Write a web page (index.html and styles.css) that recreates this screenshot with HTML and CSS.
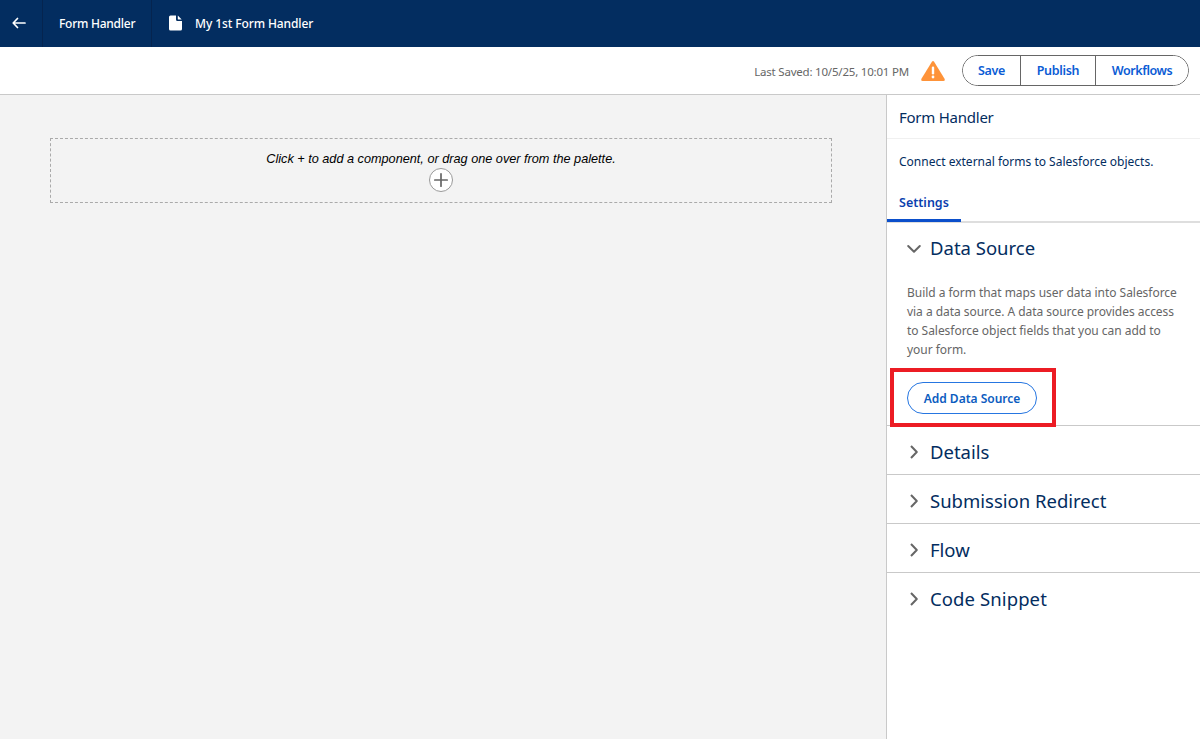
FILE: index.html
```html
<!DOCTYPE html>
<html lang="en">
  <head>
    <meta charset="utf-8">
    <title>My 1st Form Handler</title>
    <link rel="stylesheet" href="styles.css">
  </head>
  <body>
    <header class="navbar">
      <a class="nav-back" href="#" aria-label="Back">
        <svg width="14" height="12" viewBox="0 0 14 12"><path d="M13 6H1.5M5.500 1.500L1.200 6L5.500 10.500" fill="none" stroke="#fff" stroke-width="1.7" stroke-linecap="round" stroke-linejoin="round"/></svg>
      </a>
      <div class="nav-item">Form Handler</div>
      <div class="nav-page">
        <svg width="13" height="16" viewBox="0 0 13 16"><path d="M1.500 0.500H7V4.500Q7 6 8.500 6H13V14Q13 15.500 11.500 15.500H1.500Q0 15.500 0 14V2Q0 0.500 1.500 0.500Z" fill="#fff"/><path d="M8.800 0.600L12.700 4.500H9.300Q8.800 4.500 8.800 4Z" fill="#fff"/></svg>
        <span>My 1st Form Handler</span>
      </div>
    </header>

    <div class="toolbar">
      <span class="saved">Last Saved: 10/5/25, 10:01 PM</span>
      <svg class="warning" width="24" height="20" viewBox="0 0 24 20"><path d="M10.900 0.700Q12 -0.700 13.100 0.700L23.700 18Q24.400 20 22.500 20H1.500Q-0.400 20 0.300 18Z" fill="#fe9339"/><path d="M12 6.800V12.300" stroke="#fff" stroke-width="2.400" stroke-linecap="round"/><circle cx="12" cy="16" r="1.400" fill="#fff"/></svg>
      <div class="button-group">
        <button class="save">Save</button>
        <button class="publish">Publish</button>
        <button class="workflows">Workflows</button>
      </div>
    </div>

    <div class="builder">
      <main class="canvas">
        <div class="dropzone">
          <p>Click + to add a component, or drag one over from the palette.</p>
          <button class="add-component" aria-label="Add component">
            <svg width="14" height="14" viewBox="0 0 14 14"><path d="M7 0.800V13.200M0.800 7H13.200" stroke="#666" stroke-width="1.700" stroke-linecap="round"/></svg>
          </button>
        </div>
      </main>

      <aside class="panel">
        <h1>Form Handler</h1>
        <p class="panel-intro">Connect external forms to Salesforce objects.</p>
        <nav class="tabs"><a class="tab" href="#">Settings</a></nav>

        <section class="section open">
          <h2>
            <svg width="14" height="14" viewBox="0 0 14 14"><path d="M1.200 5L7 10.700L12.800 5" fill="none" stroke="#666" stroke-width="2" stroke-linecap="round" stroke-linejoin="round"/></svg>
            <span>Data Source</span>
          </h2>
          <p class="section-text">Build a form that maps user data into Salesforce<br>via a data source. A data source provides access<br>to Salesforce object fields that you can add to<br>your form.</p>
          <div class="highlight">
            <button class="add-source">Add Data Source</button>
          </div>
        </section>
        <section class="section">
          <h2>
            <svg width="14" height="14" viewBox="0 0 14 14"><path d="M4 2L9.800 8L4 14" fill="none" stroke="#666" stroke-width="2" stroke-linejoin="round"/></svg>
            <span>Details</span>
          </h2>
        </section>
        <section class="section">
          <h2>
            <svg width="14" height="14" viewBox="0 0 14 14"><path d="M4 2L9.800 8L4 14" fill="none" stroke="#666" stroke-width="2" stroke-linejoin="round"/></svg>
            <span>Submission Redirect</span>
          </h2>
        </section>
        <section class="section">
          <h2>
            <svg width="14" height="14" viewBox="0 0 14 14"><path d="M4 2L9.800 8L4 14" fill="none" stroke="#666" stroke-width="2" stroke-linejoin="round"/></svg>
            <span>Flow</span>
          </h2>
        </section>
        <section class="section">
          <h2>
            <svg width="14" height="14" viewBox="0 0 14 14"><path d="M4 2L9.800 8L4 14" fill="none" stroke="#666" stroke-width="2" stroke-linejoin="round"/></svg>
            <span class="snippet">Code Snippet</span>
          </h2>
        </section>
      </aside>
    </div>
  </body>
</html>
```
FILE: styles.css
```css
* {
  box-sizing: border-box;
  margin: 0;
  padding: 0;
}

body {
  display: flex;
  flex-direction: column;
  height: 100vh;
  overflow: hidden;
  font-family: "Segoe UI", "Noto Sans", sans-serif;
  font-size: 12px;
  color: #032d60;
  background: #fff;
}

a {
  text-decoration: none;
}

button {
  font-family: inherit;
  cursor: pointer;
}

svg {
  display: block;
  flex: none;
  overflow: visible;
}

/* Top navigation */
.navbar {
  display: flex;
  height: 47px;
  flex: none;
  color: #fff;
  background: #032d60;
  font-size: 12px;
  font-weight: 500;
  white-space: nowrap;
}

.nav-back,
.nav-item,
.nav-page {
  display: flex;
  align-items: center;
  padding-bottom: 1px;
}

.nav-back {
  width: 43px;
  padding-left: 12px;
  border-right: 1px solid #05244f;
}

.nav-item {
  width: 109px;
  padding-left: 16px;
  border-right: 1px solid #05244f;
  letter-spacing: -0.25px;
}

.nav-page {
  gap: 13px;
  padding-left: 17px;
  letter-spacing: -0.1px;
}

/* Save bar */
.toolbar {
  display: flex;
  align-items: center;
  justify-content: flex-end;
  height: 48px;
  flex: none;
  padding-right: 11px;
  border-bottom: 1px solid #c9c9c9;
}

.saved {
  padding-top: 1px;
  font-size: 11.5px;
  letter-spacing: -0.2px;
  color: #666;
}

.warning {
  margin: 0 17px 0 12px;
}

.button-group {
  display: flex;
  width: 227px;
  height: 31px;
  border: 1px solid #666;
  border-radius: 16px;
  overflow: hidden;
}

.button-group button {
  border: 0;
  border-right: 1px solid #666;
  background: #fff;
  color: #0b5cd5;
  font-size: 12.5px;
  font-weight: 600;
  letter-spacing: -0.3px;
}

.save {
  width: 58px;
}

.publish {
  width: 75px;
}

.button-group .workflows {
  flex: 1;
  border-right: 0;
  letter-spacing: -0.4px;
}

/* Canvas and drop area */
.builder {
  display: flex;
  flex: 1;
  min-height: 0;
}

.canvas {
  flex: 1;
  padding: 43px 54px 0 50px;
  background: #f3f3f3;
}

.dropzone {
  display: flex;
  flex-direction: column;
  align-items: center;
  height: 65px;
  padding-top: 11px;
  border: 1px dashed #aaa;
  font-family: Arial, "Liberation Sans", sans-serif;
  font-size: 12.7px;
  font-style: italic;
  line-height: 18px;
  color: #000;
}

.add-component {
  display: flex;
  align-items: center;
  justify-content: center;
  width: 24px;
  height: 24px;
  border: 1px solid #999;
  border-radius: 50%;
  background: #fff;
}

/* Settings panel */
.panel {
  width: 314px;
  border-left: 1px solid #c9c9c9;
  background: #fff;
  white-space: nowrap;
}

.panel h1 {
  height: 44px;
  padding-left: 12px;
  border-bottom: 1px solid #f0f0f0;
  font-size: 15px;
  font-weight: 400;
  letter-spacing: -0.25px;
  line-height: 44px;
}

.panel-intro {
  padding-left: 12px;
  height: 44px;
  font-size: 12px;
  line-height: 46px;
}

.tabs {
  display: flex;
  height: 40px;
  border-bottom: 2px solid #dedede;
}

.tab {
  width: 74px;
  height: 39px;
  padding-left: 12px;
  border-bottom: 3px solid #0b4fcb;
  color: #0b3fae;
  font-size: 12.5px;
  font-weight: 600;
  line-height: 40px;
}

.section {
  height: 49px;
  border-bottom: 1px solid #c9c9c9;
}

.section:last-child {
  border-bottom: 0;
}

.section.open {
  height: 203px;
}

.section h2 {
  display: flex;
  align-items: center;
  gap: 9px;
  height: 50px;
  padding-left: 20px;
  font-size: 18.5px;
  font-weight: 400;
}

.section.open h2 {
  height: 49px;
}

.snippet {
  letter-spacing: 0.1px;
}

.section-text {
  padding: 11px 0 0 20px;
  color: #666;
  font-size: 12px;
  letter-spacing: -0.04px;
  line-height: 19px;
}

/* Red frame around the data source button */
.highlight {
  position: relative;
  width: 166px;
  height: 59px;
  margin: 9px 0 0 3px;
  padding: 10px 0 0 13px;
  border: 4px solid #ec1c24;
  background: #fff;
}

.add-source {
  width: 130px;
  height: 32px;
  border: 1px solid #2676e1;
  border-radius: 16px;
  background: #fff;
  color: #0b5cc0;
  font-size: 12px;
  font-weight: 600;
}
```
